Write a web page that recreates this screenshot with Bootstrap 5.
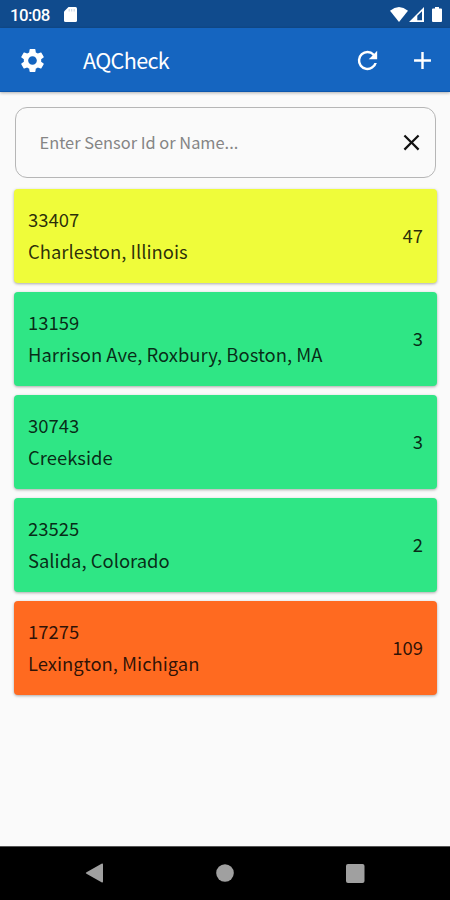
<!DOCTYPE html>
<html lang="en">
<head>
<meta charset="utf-8">
<meta name="viewport" content="width=device-width, initial-scale=1">
<title>AQCheck</title>
<link href="https://cdn.jsdelivr.net/npm/bootstrap@5.3.0/dist/css/bootstrap.min.css" rel="stylesheet">
<style>
body{font-family:"Noto Sans CJK SC","Noto Sans",sans-serif;background:#fafafa;color:#1d1d1d;height:900px;overflow:hidden}
svg{display:block;flex:none}
.status-bar{height:28px;background:#104b8d;font:500 16.8px/28px Roboto,sans-serif;padding:1px 8px 0 10px}
.clock{letter-spacing:-.6px;width:40px}
.status-bar .sd{margin-left:14px}
.wifi{margin-right:1px}
.app-bar{height:64px;background:#1565c0;box-shadow:0 1px 3px rgba(0,0,0,.3);padding:2px 13px 0 18px;border-bottom:1px solid #0d57ae}
.app-title{font-size:21.6px;letter-spacing:-.65px;line-height:32px;margin:-2px 0 0 36px}
.icon-btn{background:none;border:0;padding:0;color:inherit}
.add-btn{margin-left:26px}
.content{padding:15px 13px 0 14px}
.search-box{height:71px;border:1px solid #b6b6b6;border-radius:12px;margin:0 1px;padding:0 10px 0 23.5px}
.search-box input{font-size:16.4px;line-height:26px;color:#333;min-width:0;margin-top:-1px}
.search-box input::placeholder{color:#858585;opacity:1}
.sensors{margin-top:11px;gap:9.2px}
.sensor{height:93.9px;border:0;border-radius:4px;padding:0 14px 1.8px;font-size:18.45px;line-height:32px;box-shadow:0 1px 3px rgba(0,0,0,.32);color:rgba(0,0,0,.83)}
.level-moderate{background:#effc3a}
.level-good{background:#2fe685}
.level-unhealthy{background:#ff6a20}
.nav-keys{height:54px;background:#000;border-top:1px solid #555;padding:0 85px 1px 85px}
</style>
</head>
<body class="d-flex flex-column">
<div class="status-bar d-flex align-items-center text-white">
  <span class="clock">10:08</span>
  <svg class="sd" width="13" height="15" viewBox="0 0 13 15"><path fill="#fff" d="M4.5 0H11.5Q13 0 13 1.5V13.5Q13 15 11.5 15H1.5Q0 15 0 13.5V4.5Z"/><path stroke="#104b8d" stroke-opacity=".25" d="M5.2 2v2.5M7.7 2v2.5M10.2 2v2.5"/></svg>
  <svg class="wifi ms-auto" width="18" height="15" viewBox="0 0 18 15"><path fill="#fff" d="M9 15 0 3.7Q9-3.7 18 3.7Z"/></svg>
  <svg width="15" height="15" viewBox="0 0 15 15"><path fill="#fff" fill-rule="evenodd" d="M0 15 15 0V15ZM8.3 8.7V13.3H13V4.2Z"/></svg>
  <svg class="ms-2" width="10" height="15" viewBox="0 0 10 15"><path fill="#fff" d="M3 0H7V1.5H9Q10 1.5 10 2.5V14Q10 15 9 15H1Q0 15 0 14V2.5Q0 1.5 1 1.5H3Z"/></svg>
</div>
<header class="app-bar d-flex align-items-center text-white">
  <button class="icon-btn" aria-label="Settings"><svg width="29" height="29" viewBox="0 0 24 24" fill="currentColor"><path d="M19.14 12.94c.04-.3.06-.61.06-.94 0-.32-.02-.64-.07-.94l2.03-1.58c.18-.14.23-.41.12-.61l-1.92-3.32c-.12-.22-.37-.29-.59-.22l-2.39.96c-.5-.38-1.03-.7-1.62-.94l-.36-2.54c-.04-.24-.24-.41-.48-.41h-3.84c-.24 0-.43.17-.47.41l-.36 2.54c-.59.24-1.13.57-1.62.94l-2.39-.96c-.22-.08-.47 0-.59.22L2.74 8.87c-.12.21-.08.47.12.61l2.03 1.58c-.05.3-.09.63-.09.94s.02.64.07.94l-2.03 1.58c-.18.14-.23.41-.12.61l1.92 3.32c.12.22.37.29.59.22l2.39-.96c.5.38 1.03.7 1.62.94l.36 2.54c.05.24.24.41.48.41h3.84c.24 0 .44-.17.47-.41l.36-2.54c.59-.24 1.13-.56 1.62-.94l2.39.96c.22.08.47 0 .59-.22l1.92-3.32c.12-.22.07-.47-.12-.61l-2.01-1.58zM12 15.6c-1.98 0-3.6-1.62-3.6-3.6s1.62-3.6 3.6-3.6 3.6 1.62 3.6 3.6-1.62 3.6-3.6 3.6z"/></svg></button>
  <h1 class="app-title fw-normal">AQCheck</h1>
  <button class="icon-btn ms-auto" aria-label="Refresh"><svg width="29" height="29" viewBox="0 0 24 24" fill="currentColor"><path d="M17.65 6.35A7.96 7.96 0 0 0 12 4a8 8 0 1 0 7.73 10h-2.08A6 6 0 1 1 12 6c1.66 0 3.14.69 4.22 1.78L13 11h7V4z"/></svg></button>
  <button class="icon-btn add-btn" aria-label="Add"><svg width="29" height="29" viewBox="0 0 24 24" fill="currentColor"><path d="M19 13h-6v6h-2v-6H5v-2h6V5h2v6h6z"/></svg></button>
</header>
<main class="content flex-grow-1">
  <div class="search-box d-flex align-items-center">
    <input class="form-control border-0 bg-transparent shadow-none p-0" type="text" placeholder="Enter Sensor Id or Name..." aria-label="Sensor">
    <button class="icon-btn" aria-label="Clear"><svg width="27" height="27" viewBox="0 0 24 24" fill="#111"><path d="M19 6.41 17.59 5 12 10.59 6.41 5 5 6.41 10.59 12 5 17.59 6.41 19 12 13.41 17.59 19 19 17.59 13.41 12z"/></svg></button>
  </div>
  <div class="sensors d-flex flex-column">
    <div class="sensor level-moderate d-flex align-items-center justify-content-between"><div><div>33407</div><div>Charleston, Illinois</div></div><span>47</span></div>
    <div class="sensor level-good d-flex align-items-center justify-content-between"><div><div>13159</div><div>Harrison Ave, Roxbury, Boston, MA</div></div><span>3</span></div>
    <div class="sensor level-good d-flex align-items-center justify-content-between"><div><div>30743</div><div>Creekside</div></div><span>3</span></div>
    <div class="sensor level-good d-flex align-items-center justify-content-between"><div><div>23525</div><div>Salida, Colorado</div></div><span>2</span></div>
    <div class="sensor level-unhealthy d-flex align-items-center justify-content-between"><div><div>17275</div><div>Lexington, Michigan</div></div><span>109</span></div>
  </div>
</main>
<nav class="nav-keys d-flex align-items-center justify-content-between">
  <svg width="19" height="20" viewBox="0 0 19 20"><path fill="#a0a0a0" d="M1.5 9.2 16.5.7Q18 0 18 1.5V18.5Q18 20 16.5 19.3L1.5 10.8Q0 10 1.5 9.2Z"/></svg>
  <svg width="18" height="18" viewBox="0 0 18 18"><circle cx="9" cy="9" r="8.8" fill="#a0a0a0"/></svg>
  <svg width="19" height="19" viewBox="0 0 19 19"><rect width="18.5" height="19" rx="2" fill="#a0a0a0"/></svg>
</nav>
<script src="https://cdn.jsdelivr.net/npm/bootstrap@5.3.0/dist/js/bootstrap.bundle.min.js"></script>
</body>
</html>
